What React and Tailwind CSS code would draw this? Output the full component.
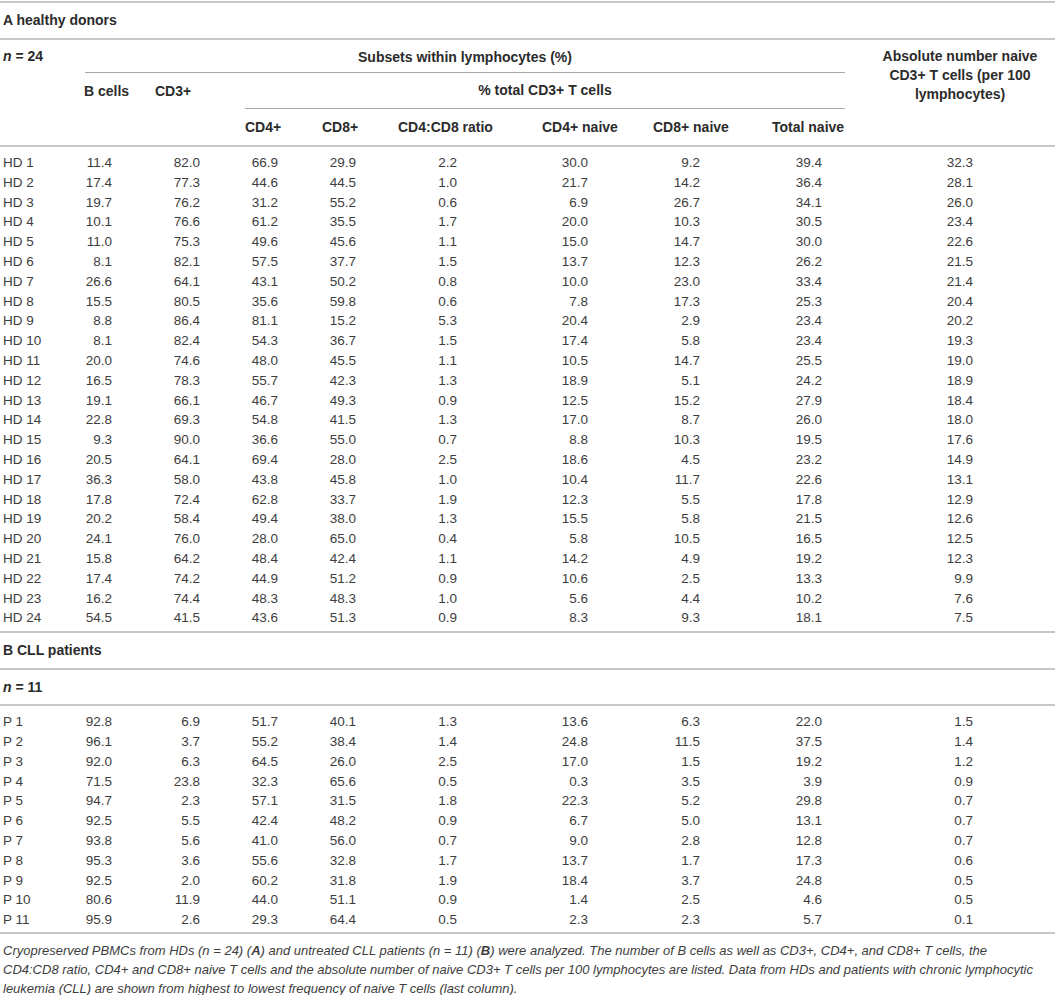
import React from "react";

const hd = [
  ["HD 1", "11.4", "82.0", "66.9", "29.9", "2.2", "30.0", "9.2", "39.4", "32.3"],
  ["HD 2", "17.4", "77.3", "44.6", "44.5", "1.0", "21.7", "14.2", "36.4", "28.1"],
  ["HD 3", "19.7", "76.2", "31.2", "55.2", "0.6", "6.9", "26.7", "34.1", "26.0"],
  ["HD 4", "10.1", "76.6", "61.2", "35.5", "1.7", "20.0", "10.3", "30.5", "23.4"],
  ["HD 5", "11.0", "75.3", "49.6", "45.6", "1.1", "15.0", "14.7", "30.0", "22.6"],
  ["HD 6", "8.1", "82.1", "57.5", "37.7", "1.5", "13.7", "12.3", "26.2", "21.5"],
  ["HD 7", "26.6", "64.1", "43.1", "50.2", "0.8", "10.0", "23.0", "33.4", "21.4"],
  ["HD 8", "15.5", "80.5", "35.6", "59.8", "0.6", "7.8", "17.3", "25.3", "20.4"],
  ["HD 9", "8.8", "86.4", "81.1", "15.2", "5.3", "20.4", "2.9", "23.4", "20.2"],
  ["HD 10", "8.1", "82.4", "54.3", "36.7", "1.5", "17.4", "5.8", "23.4", "19.3"],
  ["HD 11", "20.0", "74.6", "48.0", "45.5", "1.1", "10.5", "14.7", "25.5", "19.0"],
  ["HD 12", "16.5", "78.3", "55.7", "42.3", "1.3", "18.9", "5.1", "24.2", "18.9"],
  ["HD 13", "19.1", "66.1", "46.7", "49.3", "0.9", "12.5", "15.2", "27.9", "18.4"],
  ["HD 14", "22.8", "69.3", "54.8", "41.5", "1.3", "17.0", "8.7", "26.0", "18.0"],
  ["HD 15", "9.3", "90.0", "36.6", "55.0", "0.7", "8.8", "10.3", "19.5", "17.6"],
  ["HD 16", "20.5", "64.1", "69.4", "28.0", "2.5", "18.6", "4.5", "23.2", "14.9"],
  ["HD 17", "36.3", "58.0", "43.8", "45.8", "1.0", "10.4", "11.7", "22.6", "13.1"],
  ["HD 18", "17.8", "72.4", "62.8", "33.7", "1.9", "12.3", "5.5", "17.8", "12.9"],
  ["HD 19", "20.2", "58.4", "49.4", "38.0", "1.3", "15.5", "5.8", "21.5", "12.6"],
  ["HD 20", "24.1", "76.0", "28.0", "65.0", "0.4", "5.8", "10.5", "16.5", "12.5"],
  ["HD 21", "15.8", "64.2", "48.4", "42.4", "1.1", "14.2", "4.9", "19.2", "12.3"],
  ["HD 22", "17.4", "74.2", "44.9", "51.2", "0.9", "10.6", "2.5", "13.3", "9.9"],
  ["HD 23", "16.2", "74.4", "48.3", "48.3", "1.0", "5.6", "4.4", "10.2", "7.6"],
  ["HD 24", "54.5", "41.5", "43.6", "51.3", "0.9", "8.3", "9.3", "18.1", "7.5"],
];

const pts = [
  ["P 1", "92.8", "6.9", "51.7", "40.1", "1.3", "13.6", "6.3", "22.0", "1.5"],
  ["P 2", "96.1", "3.7", "55.2", "38.4", "1.4", "24.8", "11.5", "37.5", "1.4"],
  ["P 3", "92.0", "6.3", "64.5", "26.0", "2.5", "17.0", "1.5", "19.2", "1.2"],
  ["P 4", "71.5", "23.8", "32.3", "65.6", "0.5", "0.3", "3.5", "3.9", "0.9"],
  ["P 5", "94.7", "2.3", "57.1", "31.5", "1.8", "22.3", "5.2", "29.8", "0.7"],
  ["P 6", "92.5", "5.5", "42.4", "48.2", "0.9", "6.7", "5.0", "13.1", "0.7"],
  ["P 7", "93.8", "5.6", "41.0", "56.0", "0.7", "9.0", "2.8", "12.8", "0.7"],
  ["P 8", "95.3", "3.6", "55.6", "32.8", "1.7", "13.7", "1.7", "17.3", "0.6"],
  ["P 9", "92.5", "2.0", "60.2", "31.8", "1.9", "18.4", "3.7", "24.8", "0.5"],
  ["P 10", "80.6", "11.9", "44.0", "51.1", "0.9", "1.4", "2.5", "4.6", "0.5"],
  ["P 11", "95.9", "2.6", "29.3", "64.4", "0.5", "2.3", "2.3", "5.7", "0.1"],
];

const GRID =
  "grid grid-cols-[80px_70px_90px_78px_75px_122px_120px_120px_95px_205px]";

const valPad = [
  "pl-[3px] text-left",
  "pr-[38px] text-right",
  "pr-[40px] text-right",
  "pr-[40px] text-right",
  "pr-[37px] text-right",
  "pr-[58px] text-right",
  "pr-[47px] text-right",
  "pr-[55px] text-right",
  "pr-[28px] text-right",
  "pr-[82px] text-right",
];

function Rows({ data }) {
  return (
    <div className="flex flex-col">
      {data.map((r) => (
        <div key={r[0]} className={`${GRID} h-[19.8px] items-center`}>
          {r.map((v, i) => (
            <div key={i} className={`${valPad[i]} whitespace-nowrap leading-[19.8px]`}>
              {v}
            </div>
          ))}
        </div>
      ))}
    </div>
  );
}

export default function App() {
  return (
    <div className="w-[1055px] bg-white pt-[1px] font-['Liberation_Sans',Arial,sans-serif] text-[13.5px] text-[#3d3d3d]">
      {/* Section A title */}
      <div className="flex h-[37px] items-center border-t-2 border-[#c6c6c6] pl-[3px] text-[14px] font-bold text-[#2b2b2b]">
        A healthy donors
      </div>

      {/* Header */}
      <div
        className={`${GRID} grid-rows-[33px_36px_36px] border-t-2 border-[#c6c6c6] text-[14px] font-bold text-[#2b2b2b]`}
      >
        <div className="col-start-1 row-start-1 flex items-center pl-[3px]">
          <span className="italic">n</span>
          <span>&nbsp;= 24</span>
        </div>
        <div className="col-start-2 col-end-10 row-start-1 mx-[5px] flex items-center justify-center border-b border-[#a8a8a8] pt-[2px]">
          Subsets within lymphocytes (%)
        </div>
        <div className="col-start-10 row-start-1 row-end-4 pl-[15px] pt-[7px] text-center leading-[19px]">
          Absolute number naive
          <br />
          CD3+ T cells (per 100
          <br />
          lymphocytes)
        </div>
        <div className="col-start-2 row-start-2 flex items-center pl-[4px]">B cells</div>
        <div className="col-start-3 row-start-2 flex items-center pl-[5px]">CD3+</div>
        <div className="col-start-4 col-end-10 row-start-2 mx-[5px] flex items-center justify-center border-b border-[#a8a8a8]">
          % total CD3+ T cells
        </div>
        <div className="col-start-4 row-start-3 flex items-center pl-[5px]">CD4+</div>
        <div className="col-start-5 row-start-3 flex items-center pl-[4px]">CD8+</div>
        <div className="col-start-6 row-start-3 flex items-center pl-[5px]">CD4:CD8 ratio</div>
        <div className="col-start-7 row-start-3 flex items-center pl-[27px]">CD4+ naive</div>
        <div className="col-start-8 row-start-3 flex items-center pl-[18px]">CD8+ naive</div>
        <div className="col-start-9 row-start-3 flex items-center pl-[17px]">Total naive</div>
      </div>

      {/* HD rows */}
      <div className="border-t-2 border-[#c6c6c6] pt-[6px] pb-[3px]">
        <Rows data={hd} />
      </div>

      {/* Section B title */}
      <div className="flex h-[37px] items-center border-t-2 border-[#c6c6c6] pl-[3px] text-[14px] font-bold text-[#2b2b2b]">
        B CLL patients
      </div>
      <div className="flex h-[36px] items-center border-t-2 border-[#c6c6c6] pl-[3px] text-[14px] font-bold text-[#2b2b2b]">
        <span className="italic">n</span>
        <span>&nbsp;= 11</span>
      </div>

      {/* Patient rows */}
      <div className="border-t-2 border-[#c6c6c6] pt-[6px] pb-[2px]">
        <Rows data={pts} />
      </div>

      {/* Footnote */}
      <div className="border-t-2 border-[#c6c6c6] pt-[7px] pl-[3px] text-[13px] italic leading-[19px] text-[#3d3d3d]">
        <div className="whitespace-nowrap">
          Cryopreserved PBMCs from HDs (n = 24) (<b>A</b>) and untreated CLL patients (n = 11) (<b>B</b>) were analyzed. The number of B cells as well as CD3+, CD4+, and CD8+ T cells, the
        </div>
        <div className="whitespace-nowrap">
          CD4:CD8 ratio, CD4+ and CD8+ naive T cells and the absolute number of naive CD3+ T cells per 100 lymphocytes are listed. Data from HDs and patients with chronic lymphocytic
        </div>
        <div className="whitespace-nowrap">
          leukemia (CLL) are shown from highest to lowest frequency of naive T cells (last column).
        </div>
      </div>
    </div>
  );
}
